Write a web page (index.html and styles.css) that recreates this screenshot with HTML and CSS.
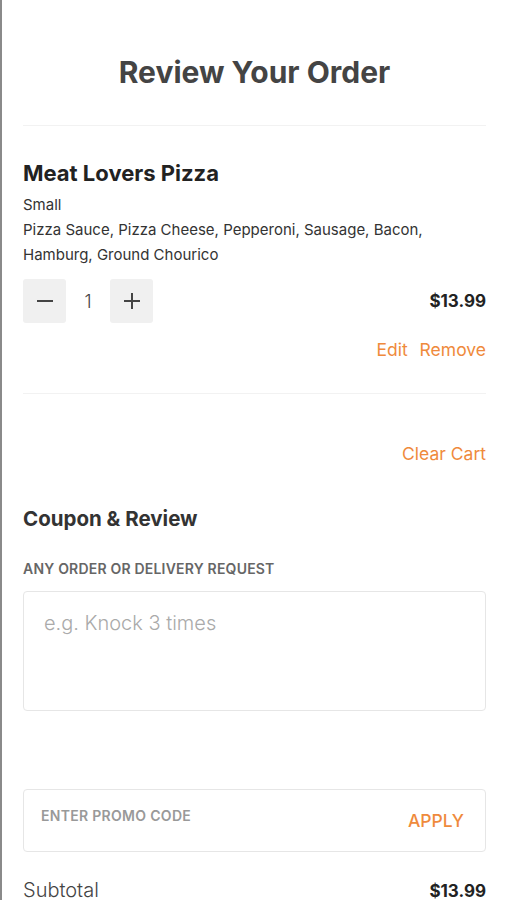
FILE: index.html
```html
<!DOCTYPE html>
<html lang="en">

<head>
    <meta charset="UTF-8">
    <meta name="viewport" content="width=device-width, initial-scale=1.0">
    <title>Review Your Order</title>
    <link rel="stylesheet" href="styles.css">
</head>

<body>
    <div class="page">
        <header class="page-header">
            <h1>Review Your Order</h1>
        </header>

        <section class="cart-item">
            <h2 class="item-name">Meat Lovers Pizza</h2>
            <p class="item-size">Small</p>
            <p class="item-toppings">Pizza Sauce, Pizza Cheese, Pepperoni, Sausage, Bacon, Hamburg, Ground Chourico</p>
            <div class="item-row">
                <div class="qty">
                    <button class="qty-btn" type="button" aria-label="Decrease">
                        <svg width="18" height="18" viewBox="0 0 18 18"><path d="M1 9h16" stroke="#444" stroke-width="2" /></svg>
                    </button>
                    <span class="qty-value">1</span>
                    <button class="qty-btn" type="button" aria-label="Increase">
                        <svg width="18" height="18" viewBox="0 0 18 18"><path d="M1 9h16M9 1v16" stroke="#444" stroke-width="2" /></svg>
                    </button>
                </div>
                <span class="price">$13.99</span>
            </div>
            <div class="item-actions">
                <a href="#" class="link">Edit</a>
                <a href="#" class="link">Remove</a>
            </div>
        </section>

        <div class="clear-row">
            <a href="#" class="link">Clear Cart</a>
        </div>

        <section class="coupon">
            <h3>Coupon &amp; Review</h3>
            <label class="field-label" for="request">Any order or delivery request</label>
            <textarea id="request" class="request" placeholder="e.g. Knock 3 times"></textarea>

            <div class="promo">
                <input type="text" class="promo-input" placeholder="ENTER PROMO CODE">
                <a href="#" class="link apply">APPLY</a>
            </div>
        </section>

        <div class="total-row">
            <span class="total-label">Subtotal</span>
            <span class="price">$13.99</span>
        </div>
    </div>
</body>

</html>
```

FILE: styles.css
```css
body {
    margin: 0;
    background: #fff;
    font-family: Inter, Lato, Arial, sans-serif;
    color: #333;
}

.page {
    border-left: 2px solid #8a8a8a;
    padding: 0 21px;
    min-height: 900px;
}

.page-header {
    padding: 54px 0 35px;
    border-bottom: 1px solid #f2f2f2;
    text-align: center;
}

.page-header h1 {
    margin: 0;
    font-size: 30px;
    line-height: 36px;
    font-weight: 700;
    color: #444;
}

.cart-item {
    padding: 33px 0 33px;
    border-bottom: 1px solid #f2f2f2;
}

.item-name {
    margin: 0 0 5px;
    font-size: 22px;
    line-height: 28px;
    font-weight: 700;
    color: #222;
}

.item-size,
.item-toppings {
    margin: 0;
    font-size: 15px;
    line-height: 25px;
    color: #333;
}

.item-toppings {
    padding-right: 50px;
}

.item-row {
    display: flex;
    justify-content: space-between;
    align-items: center;
    margin-top: 12px;
}

.qty {
    display: flex;
    align-items: center;
}

.qty-btn {
    width: 43px;
    height: 44px;
    border: none;
    border-radius: 3px;
    background: #f0f0f0;
    padding: 0;
    display: flex;
    align-items: center;
    justify-content: center;
}

.qty-value {
    width: 44px;
    text-align: center;
    font-size: 18px;
    font-weight: 300;
    color: #444;
}

.price {
    font-size: 17px;
    font-weight: 700;
    color: #222;
}

.item-actions {
    display: flex;
    justify-content: flex-end;
    gap: 12px;
    margin-top: 16px;
}

.link {
    color: #ef8a3c;
    text-decoration: none;
    font-size: 17.5px;
}

.clear-row {
    display: flex;
    justify-content: flex-end;
    padding-top: 49px;
}

.coupon {
    padding-top: 42px;
}

.coupon h3 {
    margin: 0;
    font-size: 20.5px;
    line-height: 26px;
    font-weight: 700;
    color: #333;
}

.field-label {
    display: block;
    margin-top: 28px;
    font-size: 14px;
    font-weight: 600;
    letter-spacing: 0.2px;
    text-transform: uppercase;
    color: #666;
}

.request {
    display: block;
    box-sizing: border-box;
    width: 100%;
    height: 120px;
    margin-top: 14px;
    padding: 19px 20px;
    border: 1px solid #e6e6e6;
    border-radius: 4px;
    resize: none;
    font-family: inherit;
    font-size: 20px;
    font-weight: 300;
}

.request::placeholder {
    color: #aaa;
}

.promo {
    display: flex;
    align-items: center;
    box-sizing: border-box;
    height: 63px;
    margin-top: 78px;
    padding: 0 21px 0 17px;
    border: 1px solid #e6e6e6;
    border-radius: 4px;
}

.promo-input {
    flex: 1;
    border: none;
    outline: none;
    padding: 0;
    margin-top: -10px;
    font-family: inherit;
    font-size: 14px;
    font-weight: 600;
    letter-spacing: 0.3px;
}

.promo-input::placeholder {
    color: #999;
}

.apply {
    font-size: 17.5px;
    font-weight: 500;
}

.total-row {
    display: flex;
    justify-content: space-between;
    align-items: baseline;
    padding-top: 26px;
}

.total-label {
    font-size: 20px;
    font-weight: 300;
    color: #444;
}
```
